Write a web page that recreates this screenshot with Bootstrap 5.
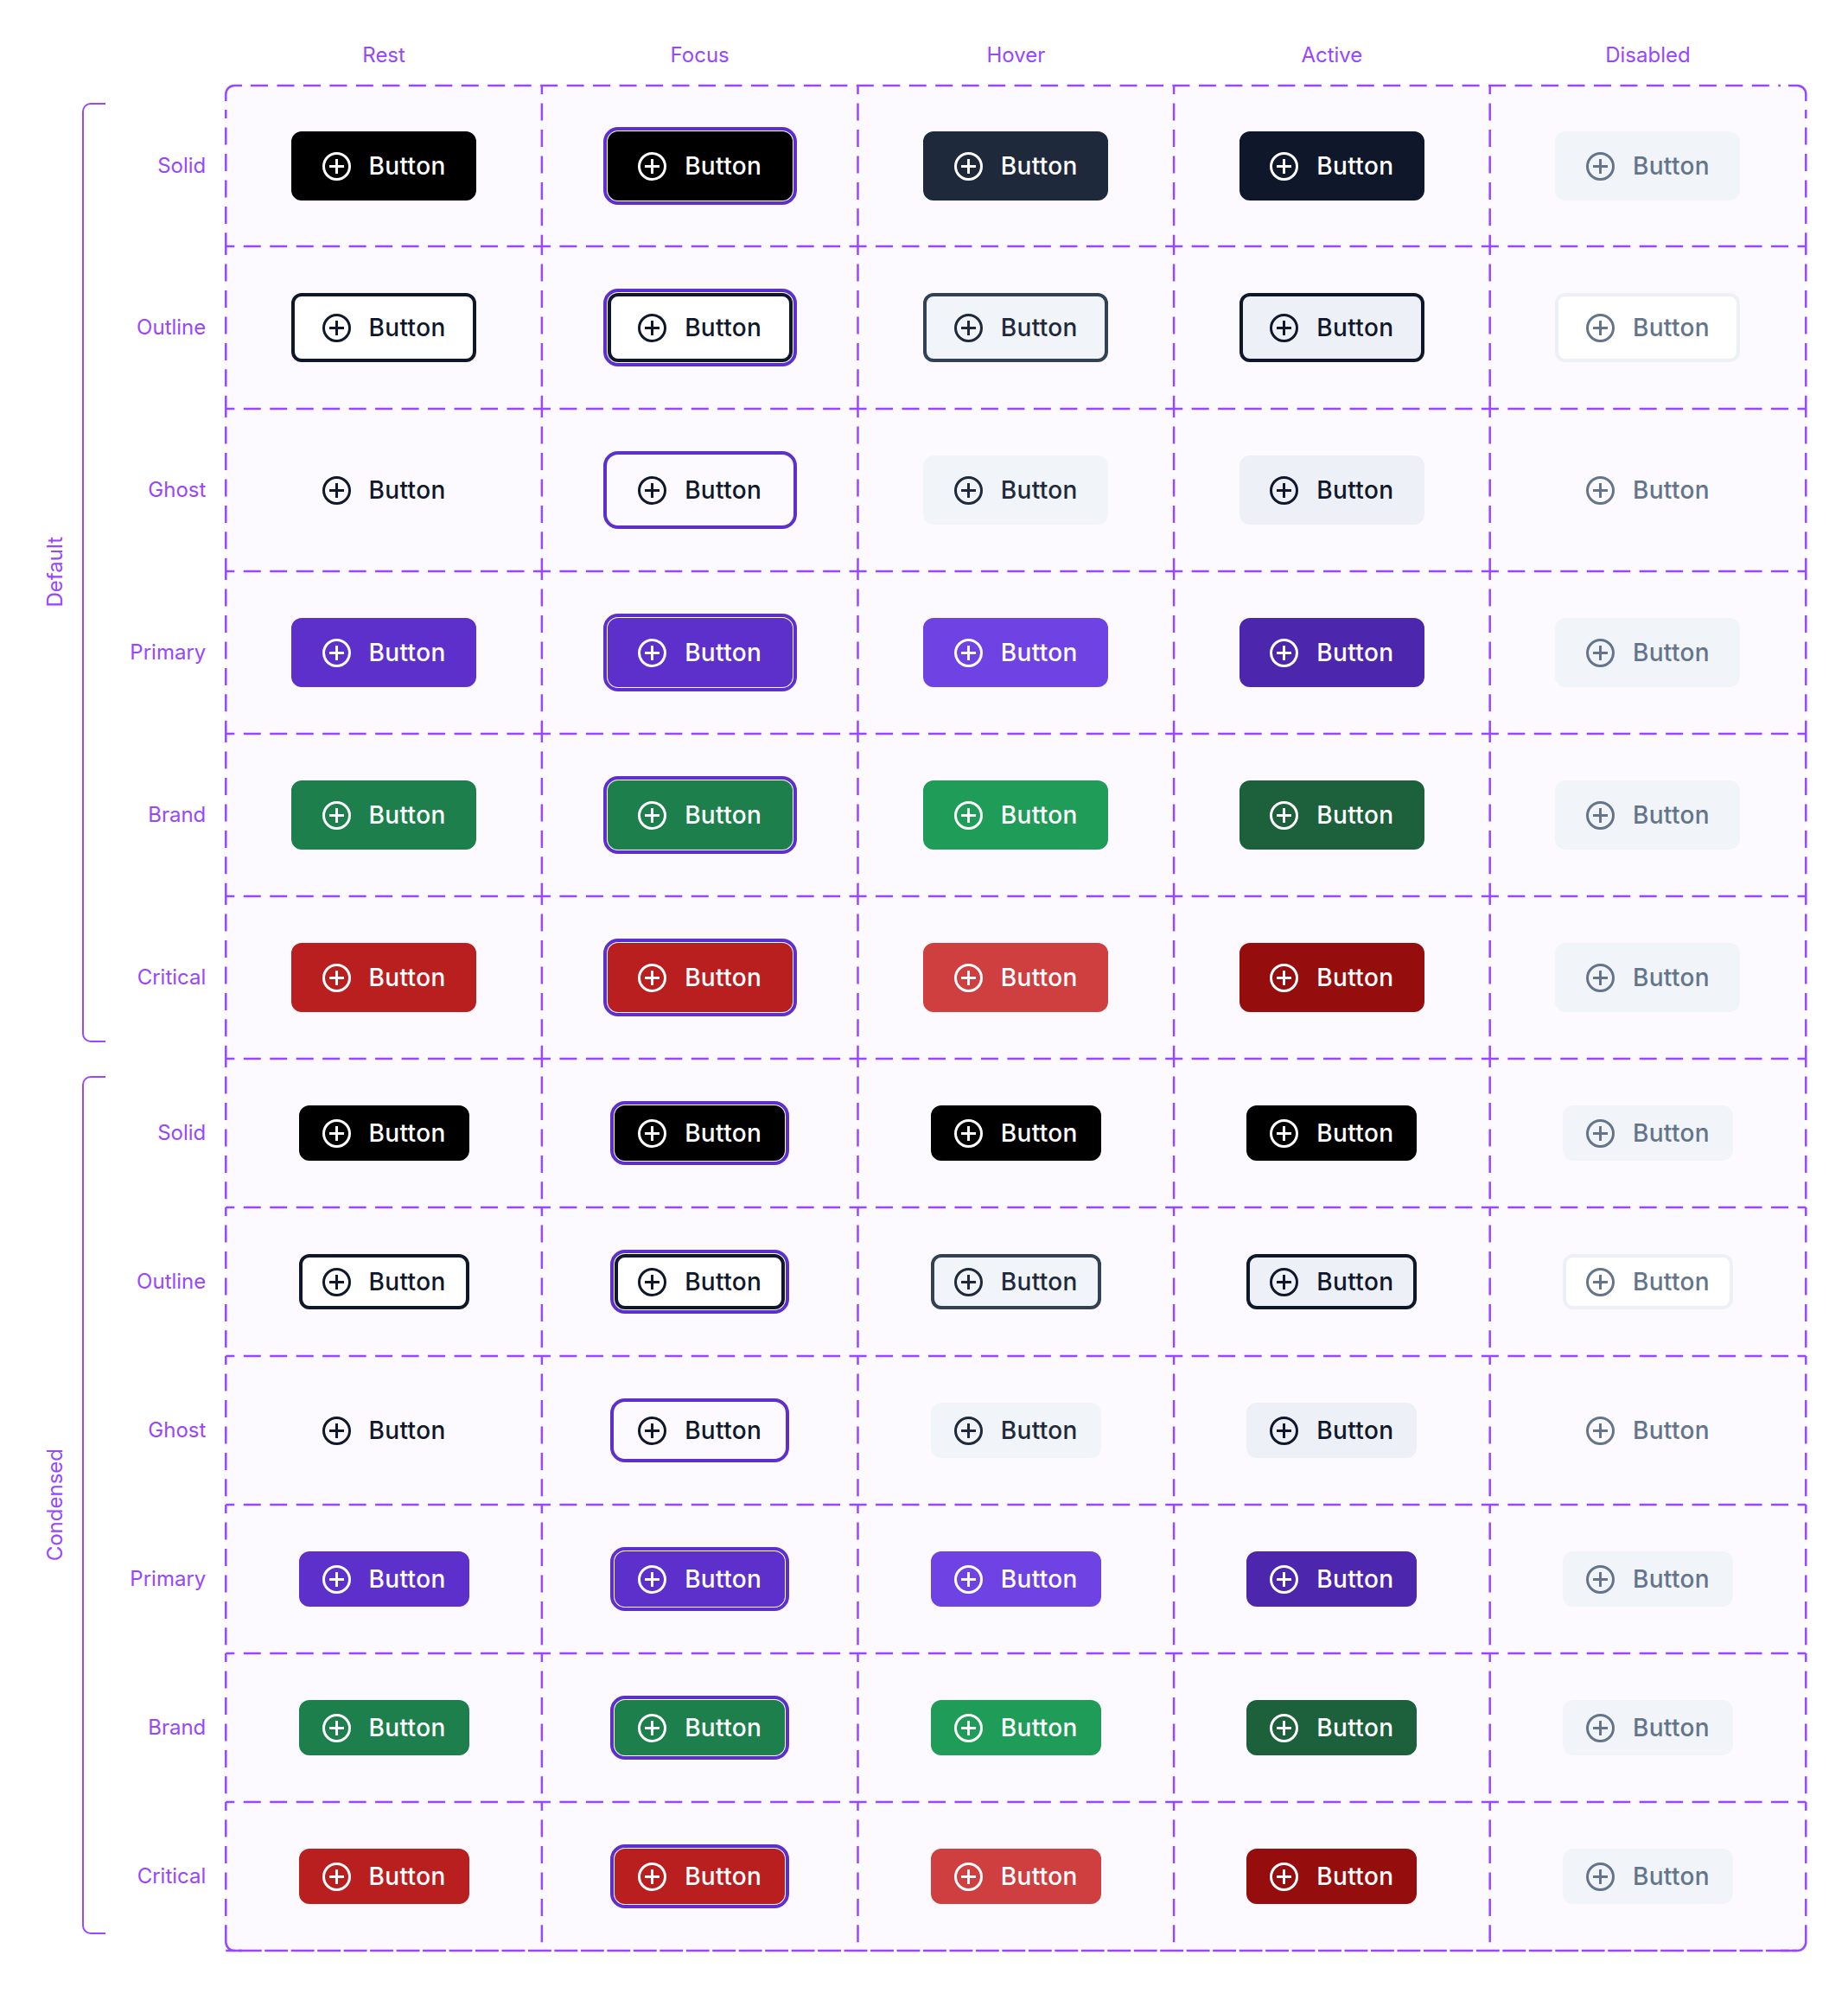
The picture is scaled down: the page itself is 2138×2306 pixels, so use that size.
<!DOCTYPE html>
<html lang="en">

<head>
	<meta charset="UTF-8">
	<meta name="viewport" content="width=device-width, initial-scale=1.0">
	<title>Button variants</title>
	<link href="https://cdn.jsdelivr.net/npm/bootstrap@5.3.0/dist/css/bootstrap.min.css" rel="stylesheet">
	<style>
		body { margin: 0; background: #fff; font-family: Inter, "Liberation Sans", sans-serif; }
		.sheet { position: relative; width: 2138px; height: 2306px; overflow: hidden; }
		.dash-layer { position: absolute; top: 0; left: 0; pointer-events: none; }
		.dash-layer path { fill: none; stroke: #9747ff; stroke-width: 2.5; }

		.head-cols { display: grid; grid-template-columns: repeat(5, 365.6px); height: 99px; padding: 46px 0 0 261.3px; }
		.tag { color: #9747ff; font-size: 24px; line-height: 36px; font-weight: 400; }

		.grp-title { width: 95px; padding-left: 32px; }
		.grp-title span { writing-mode: vertical-rl; transform: rotate(180deg); }
		.grp-bracket { width: 27px; margin: 19.5px 0; border: 2.5px solid #9747ff; border-right: 0; border-radius: 10px 0 0 10px; }
		.state-table { grid-template-columns: 139.3px repeat(5, 365.6px); }
		.tbl-default { grid-template-rows: 186px repeat(5, 188px); }
		.tbl-dense { grid-template-rows: repeat(6, 172px); }
		.row-tag { padding-right: 23px; }
		.cell-box { background: #fcfaff; }

		.pb {
			--bs-btn-border-width: 4px;
			--bs-btn-border-radius: 12px;
			--bs-btn-font-size: 28px;
			--bs-btn-font-weight: 500;
			--bs-btn-line-height: 36px;
			--bs-btn-padding-x: 0;
			--bs-btn-padding-y: 0;
			--bs-btn-disabled-opacity: 1;
			width: 214px;
			height: 80px;
			gap: 21px;
			letter-spacing: .35px;
		}
		.tbl-dense .pb { width: 197px; height: 64px; }
		.pb svg { width: 33px; height: 33px; flex: none; }

		.pb.s-focus { outline: 4.5px solid #5d30cc; outline-offset: 1.5px; box-shadow: 0 0 0 2px #fff; }
		.pb.k-ghost.s-focus { box-shadow: none; }

		.k-solid { --bs-btn-color: #fff; --bs-btn-bg: #000; --bs-btn-border-color: #000; }
		.k-solid.s-hover { --bs-btn-bg: #1e293b; --bs-btn-border-color: #1e293b; }
		.k-solid.s-active { --bs-btn-bg: #0f172a; --bs-btn-border-color: #0f172a; }
		.tbl-dense .k-solid.s-hover, .tbl-dense .k-solid.s-active { --bs-btn-bg: #000; --bs-btn-border-color: #000; }

		.k-outline { --bs-btn-color: #0f172a; --bs-btn-bg: #fff; --bs-btn-border-color: #0f172a; }
		.k-outline.s-hover { --bs-btn-color: #1e293b; --bs-btn-bg: #f1f5f9; --bs-btn-border-color: #334155; }
		.k-outline.s-active { --bs-btn-bg: #edf1f7; }

		.k-ghost { --bs-btn-color: #0f172a; --bs-btn-bg: transparent; --bs-btn-border-color: transparent; }
		.k-ghost.s-hover { --bs-btn-color: #1e293b; --bs-btn-bg: #f1f5f9; --bs-btn-border-color: #f1f5f9; }
		.k-ghost.s-active { --bs-btn-bg: #edf1f7; --bs-btn-border-color: #edf1f7; }

		.k-primary { --bs-btn-color: #fff; --bs-btn-bg: #5d30cc; --bs-btn-border-color: #5d30cc; }
		.k-primary.s-hover { --bs-btn-bg: #6f42e4; --bs-btn-border-color: #6f42e4; }
		.k-primary.s-active { --bs-btn-bg: #4c27ae; --bs-btn-border-color: #4c27ae; }

		.k-brand { --bs-btn-color: #fff; --bs-btn-bg: #1c7f4c; --bs-btn-border-color: #1c7f4c; }
		.k-brand.s-hover { --bs-btn-bg: #1f9c58; --bs-btn-border-color: #1f9c58; }
		.k-brand.s-active { --bs-btn-bg: #1c613c; --bs-btn-border-color: #1c613c; }

		.k-critical { --bs-btn-color: #fff; --bs-btn-bg: #b91f1f; --bs-btn-border-color: #b91f1f; }
		.k-critical.s-hover { --bs-btn-bg: #cf3f3f; --bs-btn-border-color: #cf3f3f; }
		.k-critical.s-active { --bs-btn-bg: #960d0d; --bs-btn-border-color: #960d0d; }

		.pb.s-off { --bs-btn-disabled-color: #64748b; --bs-btn-disabled-bg: #f1f5f9; --bs-btn-disabled-border-color: #f1f5f9; }
		.pb.k-outline.s-off { --bs-btn-disabled-bg: #fff; --bs-btn-disabled-border-color: #edf1f7; }
		.pb.k-ghost.s-off { --bs-btn-disabled-bg: transparent; --bs-btn-disabled-border-color: transparent; }
	</style>
</head>

<body>
	<!-- shared plus-in-circle icon -->
	<svg width="0" height="0" class="d-block">
		<symbol id="plus-c" viewBox="0 0 33 33">
			<circle cx="16.5" cy="16.5" r="15" fill="none" stroke="currentColor" stroke-width="3" />
			<path d="M16.5 8v17M8 16.5h17" fill="none" stroke="currentColor" stroke-width="3" />
		</symbol>
	</svg>

	<div class="sheet">
		<div class="head-cols text-center">
			<div class="tag">Rest</div>
			<div class="tag">Focus</div>
			<div class="tag">Hover</div>
			<div class="tag">Active</div>
			<div class="tag">Disabled</div>
		</div>

		<!-- Default size -->
		<div class="d-flex">
			<div class="grp-title tag d-flex align-items-center justify-content-center"><span>Default</span></div>
			<div class="grp-bracket"></div>
			<div class="d-grid state-table tbl-default" data-kinds></div>
		</div>

		<!-- Condensed size -->
		<div class="d-flex">
			<div class="grp-title tag d-flex align-items-center justify-content-center"><span>Condensed</span></div>
			<div class="grp-bracket"></div>
			<div class="d-grid state-table tbl-dense" data-kinds></div>
		</div>

		<svg class="dash-layer" width="2138" height="2306">
			<path id="corners" d="M261.3 117V109A10 10 0 0 1 271.3 99H280M2069 99H2079.3A10 10 0 0 1 2089.3 109V117M2089.3 2238V2247A10 10 0 0 1 2079.3 2257H2060M280 2257H271.3A10 10 0 0 1 261.3 2247V2238" />
			<path id="top-edge" stroke-dasharray="20 10.47" d="M290 99H2060" />
			<path id="bottom-edge" stroke-dasharray="26.9 3.57" stroke-dashoffset="16" d="M261.3 2257H2079" />
			<path id="inner-h" stroke-dasharray="20 10.47" stroke-dashoffset="10" />
			<path id="inner-v" stroke-dasharray="20 10.47" stroke-dashoffset="10" />
		</svg>
	</div>

	<script src="https://cdn.jsdelivr.net/npm/bootstrap@5.3.0/dist/js/bootstrap.bundle.min.js"></script>
	<script>
		// Build the rows of each table, every kind crossed with every state
		const kinds = ["Solid", "Outline", "Ghost", "Primary", "Brand", "Critical"];
		const states = ["rest", "focus", "hover", "active", "off"];

		document.querySelectorAll("[data-kinds]").forEach(function (table) {
			let html = "";
			kinds.forEach(function (kind) {
				html += `<div class="tag row-tag d-flex align-items-center justify-content-end">${kind}</div>`;
				states.forEach(function (state) {
					html += `<div class="cell-box d-flex align-items-center justify-content-center">
						<button type="button" class="btn pb d-flex align-items-center justify-content-center k-${kind.toLowerCase()} s-${state}"${state === "off" ? " disabled" : ""}>
							<svg><use href="#plus-c"></use></svg><span>Button</span>
						</button></div>`;
				});
			});
			table.innerHTML = html;
		});

		// Dashed grid lines, dash pattern restarts at every row
		const lineY = [99, 285, 473, 661, 849, 1037, 1225, 1397, 1569, 1741, 1913, 2085, 2257];
		let h = "", v = "";
		lineY.slice(1, -1).forEach(function (y) { h += `M261.3 ${y}H2089.3`; });
		for (let i = 0; i <= 5; i++) {
			const x = 261.3 + i * 365.6;
			lineY.slice(0, -1).forEach(function (y, r) {
				const from = r === 0 && (i === 0 || i === 5) ? 127 : y;
				const to = r === lineY.length - 2 && (i === 0 || i === 5) ? 2238 : lineY[r + 1];
				v += `M${x} ${from}V${to}`;
			});
		}
		document.getElementById("inner-h").setAttribute("d", h);
		document.getElementById("inner-v").setAttribute("d", v);
	</script>
</body>

</html>
